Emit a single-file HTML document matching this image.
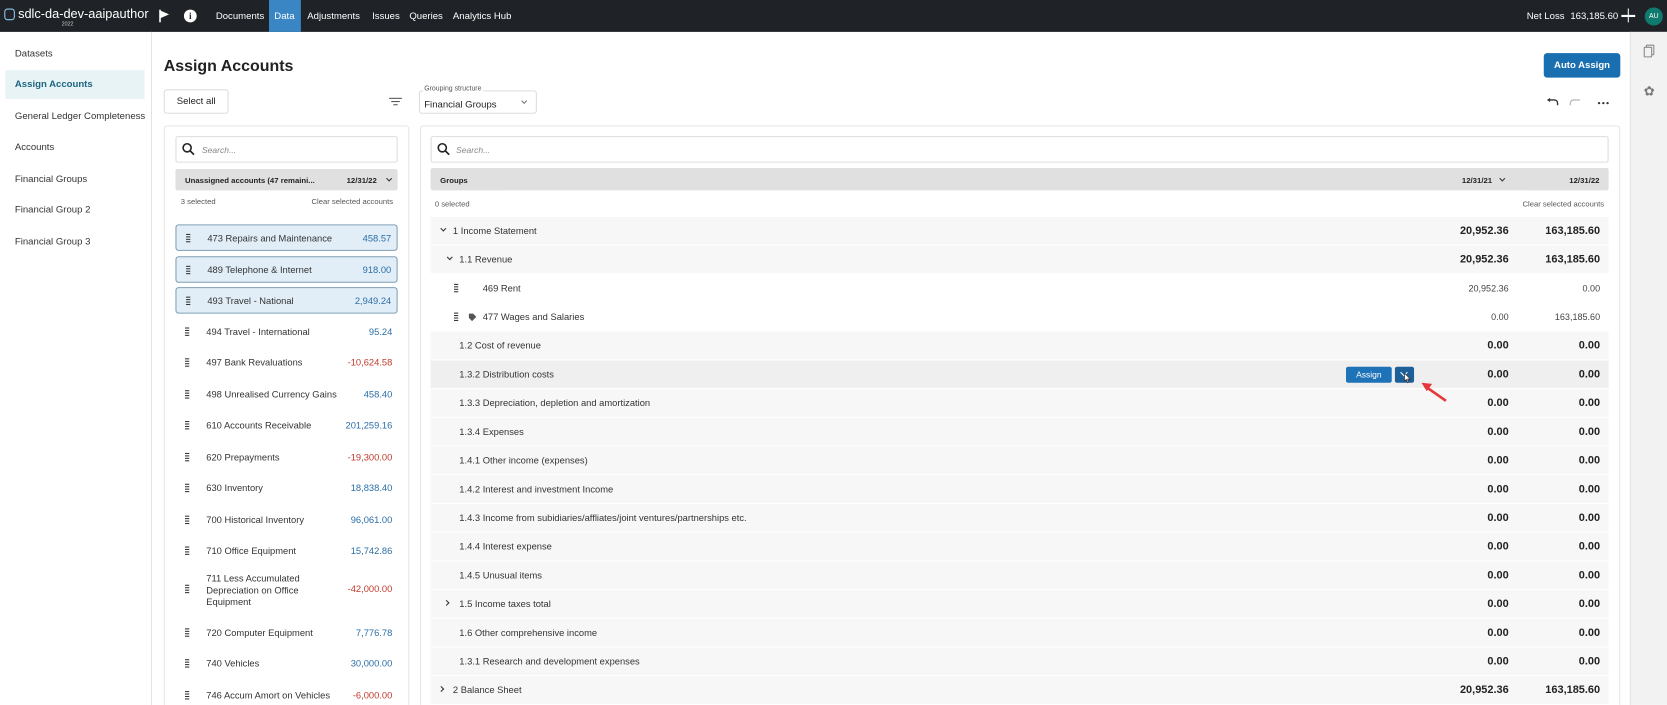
<!DOCTYPE html>
<html><head><meta charset="utf-8"><style>
*{box-sizing:border-box;margin:0;padding:0}
html,body{width:1667px;height:704px;overflow:hidden;background:#fff}
#w{position:absolute;left:0;top:0;width:1568px;height:663px;transform:scale(1.0632);transform-origin:0 0;font-family:"Liberation Sans",sans-serif;color:#333;background:#fff;overflow:hidden}
.a{position:absolute}
.t{position:absolute;white-space:nowrap}
.top{left:0;top:0;width:1568px;height:30px;background:#1f2327}
.nav{color:#fff;font-size:9px;top:10px}
.side{font-size:9px;color:#333;left:14px}
.row{position:absolute;left:405px;width:1108px;height:26px;background:#f7f7f7}
.row.w{background:#fff}
.row span{position:absolute;top:8px;font-size:8.8px;color:#333;white-space:nowrap}
.row .v1,.row .v2{font-weight:bold;font-size:10.3px;top:8px;color:#222}
.v1{right:94px}.v2{right:8px}
.row .n{font-weight:normal;font-size:8.5px;color:#444;top:8px}
.acc{position:absolute;left:165px;width:209px;height:25px}
.acc.s{background:#e2eef7;border:1px solid #7f9fb6;border-radius:3px}
.hd{position:absolute;width:4px;height:1px;background:#333;box-shadow:0 2.3px #333,0 4.6px #333,0 6.9px #333}
.acc .hd{left:9px;top:8px}
.acc .nm{position:absolute;left:29px;top:7px;font-size:8.8px;color:#333;white-space:nowrap}
.acc .val{position:absolute;right:5px;top:7px;font-size:8.8px;color:#2a6ea6}
.acc .val.r{color:#c0392b}
.chev{display:block;width:5px;height:5px;border-right:1.3px solid #333;border-bottom:1.3px solid #333;transform:rotate(45deg)}
</style></head><body><div id="w">
<div class="a top"></div>
<div class="a" style="left:4px;top:8px;width:10px;height:11px;border:1.5px solid #8fc7ef;border-radius:3px"></div>
<div class="t" style="left:17px;top:6px;color:#fff;font-size:12px">sdlc-da-dev-aaipauthor</div>
<div class="t" style="left:58px;top:20px;color:#ccc;font-size:5px">2022</div>
<svg class="a" style="left:149px;top:9px" width="12" height="12"><path d="M1.5 0v12" stroke="#fff" stroke-width="1.5"/><path d="M2 1l8 3.5-8 3.5z" fill="#fff"/></svg>
<div class="a" style="left:173px;top:9px;width:12px;height:12px;border-radius:6px;background:#fff;color:#1f2327;font-size:9px;font-weight:bold;text-align:center;line-height:12px;font-family:'Liberation Serif',serif">i</div>
<div class="t nav" style="left:203px">Documents</div>
<div class="a" style="left:253px;top:0;width:30px;height:30px;background:#3a86c4"></div>
<div class="t nav" style="left:258px">Data</div>
<div class="t nav" style="left:289px">Adjustments</div>
<div class="t nav" style="left:350px">Issues</div>
<div class="t nav" style="left:385px">Queries</div>
<div class="t nav" style="left:426px">Analytics Hub</div>
<div class="t nav" style="left:1436px">Net Loss</div>
<div class="t nav" style="left:1477px">163,185.60</div>
<div class="a" style="left:1525px;top:14px;width:13px;height:1.6px;background:#fff"></div>
<div class="a" style="left:1530.7px;top:8px;width:1.6px;height:13px;background:#fff"></div>
<div class="a" style="left:1547px;top:7px;width:17px;height:17px;border-radius:9px;background:#0f7a6e;color:#fff;font-size:6.5px;text-align:center;line-height:17px">AU</div>

<div class="a" style="left:0;top:30px;width:143px;height:640px;border-right:1px solid #e3e3e3"></div>
<div class="t side" style="top:45px">Datasets</div>
<div class="a" style="left:5px;top:66px;width:131px;height:27px;background:#e8f3f6"></div>
<div class="t side" style="top:74px;color:#1c6680;font-weight:bold">Assign Accounts</div>
<div class="t side" style="top:104px">General Ledger Completeness</div>
<div class="t side" style="top:133px">Accounts</div>
<div class="t side" style="top:163px">Financial Groups</div>
<div class="t side" style="top:192px">Financial Group 2</div>
<div class="t side" style="top:222px">Financial Group 3</div>

<div class="a" style="left:1533px;top:30px;width:35px;height:640px;background:#f2f2f2;border-left:1px solid #e3e3e3"></div>
<div class="a" style="left:1548px;top:42px;width:8px;height:10px;border:1.2px solid #888;border-radius:1px"></div>
<div class="a" style="left:1546px;top:44px;width:8px;height:10px;border:1.2px solid #888;border-radius:1px;background:#f2f2f2"></div>
<div class="t" style="left:1546px;top:79px;color:#777;font-size:12px">✿</div>

<div class="t" style="left:154px;top:54px;font-size:15px;font-weight:bold;color:#222">Assign Accounts</div>
<div class="a" style="left:1452px;top:50px;width:72px;height:23px;background:#1a6fb0;border-radius:3px;color:#fff;font-size:9px;font-weight:bold;text-align:center;line-height:23px">Auto Assign</div>
<div class="a" style="left:154px;top:84px;width:61px;height:23px;border:1px solid #ddd;border-radius:3px;font-size:9px;text-align:center;line-height:21px;color:#222">Select all</div>
<div class="a" style="left:366px;top:92px;width:12px;height:1.3px;background:#555"></div>
<div class="a" style="left:368px;top:95px;width:8px;height:1.3px;background:#555"></div>
<div class="a" style="left:370px;top:98px;width:4px;height:1.3px;background:#555"></div>
<div class="a" style="left:394px;top:85px;width:111px;height:22px;border:1px solid #ddd;border-radius:3px"></div>
<div class="t" style="left:398px;top:80px;font-size:6.5px;color:#555;background:#fff;padding:0 1px">Grouping structure</div>
<div class="t" style="left:399px;top:93px;font-size:9px;color:#222">Financial Groups</div>
<div class="a" style="left:491px;top:93px"><span class="chev" style="width:4px;height:4px;border-color:#777;border-width:0 1px 1px 0"></span></div>
<svg class="a" style="left:1454px;top:91px" width="60" height="10"><path d="M2 3h6a3 3 0 0 1 3 3v2" fill="none" stroke="#333" stroke-width="1.3"/><path d="M1 3l3-2v4z" fill="#333"/><path d="M32 3h-6a3 3 0 0 0-3 3v2" fill="none" stroke="#bbb" stroke-width="1.3"/><circle cx="50" cy="6" r="1.1" fill="#333"/><circle cx="54" cy="6" r="1.1" fill="#333"/><circle cx="58" cy="6" r="1.1" fill="#333"/></svg>

<!-- left panel -->
<div class="a" style="left:154px;top:118px;width:231px;height:560px;border:1px solid #e6e6e6;border-radius:3px"></div>
<div class="a" style="left:165px;top:128px;width:209px;height:25px;border:1px solid #ddd;border-radius:2px"></div>
<svg class="a" style="left:171px;top:134px" width="12" height="12"><circle cx="5" cy="5" r="3.8" fill="none" stroke="#222" stroke-width="1.5"/><path d="M8 8l3.5 3.5" stroke="#222" stroke-width="1.6"/></svg>
<div class="t" style="left:190px;top:137px;font-size:8px;color:#888;font-style:italic">Search...</div>
<div class="a" style="left:165px;top:159px;width:209px;height:20px;background:#e0e0e0;border-radius:2px"></div>
<div class="t" style="left:174px;top:165px;font-size:7.3px;font-weight:bold;color:#222">Unassigned accounts (47 remaini...</div>
<div class="t" style="left:326px;top:165px;font-size:7.3px;font-weight:bold;color:#222">12/31/22</div>
<div class="a" style="left:364px;top:166px"><span class="chev" style="width:4px;height:4px;border-width:0 1px 1px 0"></span></div>
<div class="t" style="left:170px;top:185px;font-size:7.2px;color:#555">3 selected</div>
<div class="t" style="left:293px;top:185px;font-size:7.2px;color:#555">Clear selected accounts</div>

<div class="acc s" style="top:211px"><div class="hd"></div><div class="nm">473 Repairs and Maintenance</div><div class="val">458.57</div></div>
<div class="acc s" style="top:241px"><div class="hd"></div><div class="nm">489 Telephone &amp; Internet</div><div class="val">918.00</div></div>
<div class="acc s" style="top:270px"><div class="hd"></div><div class="nm">493 Travel - National</div><div class="val">2,949.24</div></div>
<div class="acc" style="top:300px"><div class="hd"></div><div class="nm">494 Travel - International</div><div class="val">95.24</div></div>
<div class="acc" style="top:329px"><div class="hd"></div><div class="nm">497 Bank Revaluations</div><div class="val r">-10,624.58</div></div>
<div class="acc" style="top:359px"><div class="hd"></div><div class="nm">498 Unrealised Currency Gains</div><div class="val">458.40</div></div>
<div class="acc" style="top:388px"><div class="hd"></div><div class="nm">610 Accounts Receivable</div><div class="val">201,259.16</div></div>
<div class="acc" style="top:418px"><div class="hd"></div><div class="nm">620 Prepayments</div><div class="val r">-19,300.00</div></div>
<div class="acc" style="top:447px"><div class="hd"></div><div class="nm">630 Inventory</div><div class="val">18,838.40</div></div>
<div class="acc" style="top:477px"><div class="hd"></div><div class="nm">700 Historical Inventory</div><div class="val">96,061.00</div></div>
<div class="acc" style="top:506px"><div class="hd"></div><div class="nm">710 Office Equipment</div><div class="val">15,742.86</div></div>
<div class="acc" style="top:542px"><div class="hd"></div><div class="nm" style="top:-3px;line-height:11px">711 Less Accumulated<br>Depreciation on Office<br>Equipment</div><div class="val r">-42,000.00</div></div>
<div class="acc" style="top:583px"><div class="hd"></div><div class="nm">720 Computer Equipment</div><div class="val">7,776.78</div></div>
<div class="acc" style="top:612px"><div class="hd"></div><div class="nm">740 Vehicles</div><div class="val">30,000.00</div></div>
<div class="acc" style="top:642px"><div class="hd"></div><div class="nm">746 Accum Amort on Vehicles</div><div class="val r">-6,000.00</div></div>

<!-- right panel -->
<div class="a" style="left:395px;top:118px;width:1129px;height:560px;border:1px solid #e6e6e6;border-radius:3px"></div>
<div class="a" style="left:405px;top:128px;width:1108px;height:25px;border:1px solid #ddd;border-radius:2px"></div>
<svg class="a" style="left:411px;top:134px" width="12" height="12"><circle cx="5" cy="5" r="3.8" fill="none" stroke="#222" stroke-width="1.5"/><path d="M8 8l3.5 3.5" stroke="#222" stroke-width="1.6"/></svg>
<div class="t" style="left:429px;top:137px;font-size:8px;color:#888;font-style:italic">Search...</div>
<div class="a" style="left:405px;top:158px;width:1108px;height:21px;background:#e0e0e0;border-radius:2px"></div>
<div class="t" style="left:414px;top:165px;font-size:7.3px;font-weight:bold;color:#222">Groups</div>
<div class="t" style="left:1375px;top:165px;font-size:7.3px;font-weight:bold;color:#222">12/31/21</div>
<div class="a" style="left:1411px;top:166px"><span class="chev" style="width:4px;height:4px;border-width:0 1px 1px 0"></span></div>
<div class="t" style="left:1476px;top:165px;font-size:7.3px;font-weight:bold;color:#222">12/31/22</div>
<div class="t" style="left:409px;top:187px;font-size:7.2px;color:#555">0 selected</div>
<div class="t" style="left:1432px;top:187px;font-size:7.2px;color:#555">Clear selected accounts</div>

<div class="row" style="top:204px"><span style="left:10px;top:9px"><i class="chev" style="width:4px;height:4px"></i></span><span style="left:21px">1 Income Statement</span><span class="v1">20,952.36</span><span class="v2">163,185.60</span></div>
<div class="row" style="top:231px"><span style="left:16px;top:9px"><i class="chev" style="width:4px;height:4px"></i></span><span style="left:27px">1.1 Revenue</span><span class="v1">20,952.36</span><span class="v2">163,185.60</span></div>
<div class="row w" style="top:258px"><div class="hd" style="left:22px;top:9px"></div><span style="left:49px">469 Rent</span><span class="v1 n">20,952.36</span><span class="v2 n">0.00</span></div>
<div class="row w" style="top:285px"><div class="hd" style="left:22px;top:9px"></div><svg class="a" style="left:35px;top:9px" width="9" height="9"><path d="M1 1h4l3 3-4 4-3-3z" fill="#555"/></svg><span style="left:49px">477 Wages and Salaries</span><span class="v1 n">0.00</span><span class="v2 n">163,185.60</span></div>
<div class="row" style="top:312px"><span style="left:27px">1.2 Cost of revenue</span><span class="v1">0.00</span><span class="v2">0.00</span></div>
<div class="row" style="top:339px;background:#efefef"><span style="left:27px">1.3.2 Distribution costs</span><span class="v1">0.00</span><span class="v2">0.00</span></div>
<div class="row" style="top:366px"><span style="left:27px">1.3.3 Depreciation, depletion and amortization</span><span class="v1">0.00</span><span class="v2">0.00</span></div>
<div class="row" style="top:393px"><span style="left:27px">1.3.4 Expenses</span><span class="v1">0.00</span><span class="v2">0.00</span></div>
<div class="row" style="top:420px"><span style="left:27px">1.4.1 Other income (expenses)</span><span class="v1">0.00</span><span class="v2">0.00</span></div>
<div class="row" style="top:447px"><span style="left:27px">1.4.2 Interest and investment Income</span><span class="v1">0.00</span><span class="v2">0.00</span></div>
<div class="row" style="top:474px"><span style="left:27px">1.4.3 Income from subidiaries/affliates/joint ventures/partnerships etc.</span><span class="v1">0.00</span><span class="v2">0.00</span></div>
<div class="row" style="top:501px"><span style="left:27px">1.4.4 Interest expense</span><span class="v1">0.00</span><span class="v2">0.00</span></div>
<div class="row" style="top:528px"><span style="left:27px">1.4.5 Unusual items</span><span class="v1">0.00</span><span class="v2">0.00</span></div>
<div class="row" style="top:555px"><span style="left:13px;top:10px"><i class="chev" style="width:4px;height:4px;transform:rotate(-45deg)"></i></span><span style="left:27px">1.5 Income taxes total</span><span class="v1">0.00</span><span class="v2">0.00</span></div>
<div class="row" style="top:582px"><span style="left:27px">1.6 Other comprehensive income</span><span class="v1">0.00</span><span class="v2">0.00</span></div>
<div class="row" style="top:609px"><span style="left:27px">1.3.1 Research and development expenses</span><span class="v1">0.00</span><span class="v2">0.00</span></div>
<div class="row" style="top:636px"><span style="left:8px;top:10px"><i class="chev" style="width:4px;height:4px;transform:rotate(-45deg)"></i></span><span style="left:21px">2 Balance Sheet</span><span class="v1">20,952.36</span><span class="v2">163,185.60</span></div>

<div class="a" style="left:1266px;top:345px;width:43px;height:15px;background:#1d72b8;border-radius:2px;color:#fff;font-size:8px;text-align:center;line-height:15px">Assign</div>
<div class="a" style="left:1312px;top:345px;width:18px;height:15px;background:#1d5f99;border-radius:2px"></div>
<div class="a" style="left:1318px;top:348px"><span class="chev" style="width:5px;height:5px;border-color:#fff"></span></div>
<svg class="a" style="left:1316px;top:347px" width="50" height="36"><path d="M5 4v7l2-1 1 3 1-.5-1-3h2.5z" fill="#fff" stroke="#333" stroke-width=".7"/><path d="M44 30L24 16" stroke="#e8373a" stroke-width="2.5"/><path d="M21 13l10 1-5 7z" fill="#e8373a"/></svg>
</div></body></html>
